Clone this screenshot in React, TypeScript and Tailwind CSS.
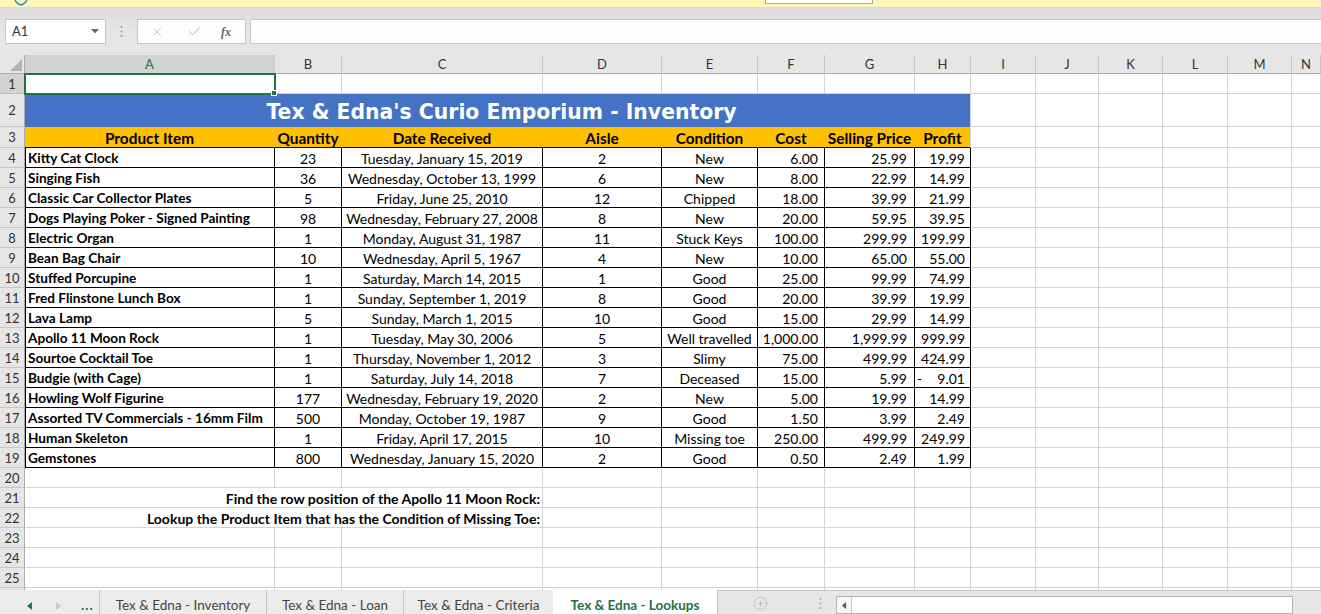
import { X, Check, CirclePlus } from 'lucide-react'

const COLS = 'grid grid-cols-[25px_250px_67px_201px_119px_96px_67px_90px_56px_65px_63px_64px_65px_64px_1fr] grid-rows-[100%] leading-none'
const LETTERS = ['A', 'B', 'C', 'D', 'E', 'F', 'G', 'H', 'I', 'J', 'K', 'L', 'M', 'N']

type Item = [string, string, string, string, string, string, string, string]

const items: Item[] = [
  ['Kitty Cat Clock', '23', 'Tuesday, January 15, 2019', '2', 'New', '6.00', '25.99', '19.99'],
  ['Singing Fish', '36', 'Wednesday, October 13, 1999', '6', 'New', '8.00', '22.99', '14.99'],
  ['Classic Car Collector Plates', '5', 'Friday, June 25, 2010', '12', 'Chipped', '18.00', '39.99', '21.99'],
  ['Dogs Playing Poker - Signed Painting', '98', 'Wednesday, February 27, 2008', '8', 'New', '20.00', '59.95', '39.95'],
  ['Electric Organ', '1', 'Monday, August 31, 1987', '11', 'Stuck Keys', '100.00', '299.99', '199.99'],
  ['Bean Bag Chair', '10', 'Wednesday, April 5, 1967', '4', 'New', '10.00', '65.00', '55.00'],
  ['Stuffed Porcupine', '1', 'Saturday, March 14, 2015', '1', 'Good', '25.00', '99.99', '74.99'],
  ['Fred Flinstone Lunch Box', '1', 'Sunday, September 1, 2019', '8', 'Good', '20.00', '39.99', '19.99'],
  ['Lava Lamp', '5', 'Sunday, March 1, 2015', '10', 'Good', '15.00', '29.99', '14.99'],
  ['Apollo 11 Moon Rock', '1', 'Tuesday, May 30, 2006', '5', 'Well travelled', '1,000.00', '1,999.99', '999.99'],
  ['Sourtoe Cocktail Toe', '1', 'Thursday, November 1, 2012', '3', 'Slimy', '75.00', '499.99', '424.99'],
  ['Budgie (with Cage)', '1', 'Saturday, July 14, 2018', '7', 'Deceased', '15.00', '5.99', '-9.01'],
  ['Howling Wolf Figurine', '177', 'Wednesday, February 19, 2020', '2', 'New', '5.00', '19.99', '14.99'],
  ['Assorted TV Commercials - 16mm Film', '500', 'Monday, October 19, 1987', '9', 'Good', '1.50', '3.99', '2.49'],
  ['Human Skeleton', '1', 'Friday, April 17, 2015', '10', 'Missing toe', '250.00', '499.99', '249.99'],
  ['Gemstones', '800', 'Wednesday, January 15, 2020', '2', 'Good', '0.50', '2.49', '1.99'],
]

const grid = 'border-r border-b border-[#d4d4d4]'

function RowHead({ n, active }: { n?: number; active?: boolean }) {
  return (
    <div
      className={`flex items-center justify-center pt-px border-r border-b text-[13px] text-[#333] ${
        active ? 'bg-[#d2d2d2] border-r-[#217346] border-b-[#bdbdbd]' : 'bg-[#e6e6e6] border-r-[#ababab] border-b-[#c6c6c6]'
      }`}
    >
      {n}
    </div>
  )
}

function Empties({ from }: { from: number }) {
  return (
    <>
      {LETTERS.slice(from).map((l) => (
        <div key={l} className={grid} />
      ))}
    </>
  )
}

function DataRow({ n, item }: { n: number; item: Item }) {
  const cell = 'border-r border-b border-black flex items-center pt-[2px] overflow-hidden whitespace-nowrap'
  const neg = item[7].startsWith('-')
  return (
    <div className={`${COLS} h-[20px] text-[14px]`}>
      <RowHead n={n} />
      <div className={`${cell} shadow-[inset_1px_0_0_#000] pl-[3px] font-bold text-[13.6px]`}>{item[0]}</div>
      <div className={`${cell} justify-center`}>{item[1]}</div>
      <div className={`${cell} justify-center`}>{item[2]}</div>
      <div className={`${cell} justify-center`}>{item[3]}</div>
      <div className={`${cell} justify-center`}>{item[4]}</div>
      <div className={`${cell} justify-end pr-[6px]`}>{item[5]}</div>
      <div className={`${cell} justify-end pr-[7px]`}>{item[6]}</div>
      <div className={`${cell} justify-between pr-[5px]`}>
        <span className="pl-[2px]">{neg ? '-' : ''}</span>
        <span>{neg ? item[7].slice(1) : item[7]}</span>
      </div>
      <Empties from={8} />
    </div>
  )
}

function EmptyRow({ n }: { n?: number }) {
  return (
    <div className={`${COLS} h-[20px]`}>
      <RowHead n={n} />
      <Empties from={0} />
    </div>
  )
}

function QuestionRow({ n, text }: { n: number; text: string }) {
  return (
    <div className={`${COLS} h-[20px]`}>
      <RowHead n={n} />
      <div className={`col-span-3 ${grid} flex items-center pt-[2px] justify-end pr-[2px] font-bold text-[14px] whitespace-nowrap`}>
        {text}
      </div>
      <Empties from={3} />
    </div>
  )
}

function Tri({ dir, color }: { dir: 'l' | 'r'; color: string }) {
  return (
    <svg width="5" height="8" viewBox="0 0 5 8">
      <polygon points={dir === 'l' ? '5,0 0,4 5,8' : '0,0 5,4 0,8'} fill={color} />
    </svg>
  )
}

export default function App() {
  return (
    <div className="w-[1321px] h-[614px] overflow-hidden bg-white text-[13px] text-black font-['Lato',_'Liberation_Sans',_sans-serif]">
      {/* message bar, mostly scrolled off */}
      <div className="relative h-[8px] overflow-hidden bg-[#fdf6b4] border-b border-[#ece08e]">
        <svg className="absolute left-[14px] -top-[9px]" width="14" height="15" viewBox="0 0 14 15">
          <path d="M7 1 L13 3 V7.5 C13 10.5 10.5 12.8 7 14 C3.5 12.8 1 10.5 1 7.5 V3 Z" fill="none" stroke="#2b88d8" strokeWidth="1.5" />
        </svg>
        <div className="absolute left-[765px] -top-[10px] w-[108px] h-[14px] bg-white border border-[#ababab]" />
      </div>

      {/* formula bar */}
      <div className="h-[47px] bg-gradient-to-b from-[#dcdcdc] via-[#e6e6e6] to-[#e6e6e6] pt-[11px] flex items-start">
        <div className="ml-[5px] w-[101px] h-[25px] bg-white border border-[#c6c6c6] flex items-center justify-between pl-[6px] pr-[6px] text-[13px] text-[#333]">
          <span>A1</span>
          <svg width="8" height="5" viewBox="0 0 8 5">
            <polygon points="0,0 8,0 4,4.5" fill="#6a6a6a" />
          </svg>
        </div>
        <div className="w-[31px] h-[25px] flex items-center justify-center">
          <svg width="3" height="13" viewBox="0 0 3 13">
            <circle cx="1.5" cy="2" r="1" fill="#9a9a9a" />
            <circle cx="1.5" cy="6.5" r="1" fill="#9a9a9a" />
            <circle cx="1.5" cy="11" r="1" fill="#9a9a9a" />
          </svg>
        </div>
        <div className="w-[109px] h-[25px] bg-[#fdfdfd] border border-[#c6c6c6] flex items-center">
          <X className="ml-[12px]" size={14} strokeWidth={1.3} color="#b4b4b4" />
          <Check className="ml-[23px]" size={15} strokeWidth={1.6} color="#b4b4b4" />
          <span className="ml-[19px] italic font-bold text-[12px] text-[#666] font-['Liberation_Serif',_serif]">fx</span>
        </div>
        <div className="ml-[4px] flex-1 h-[25px] bg-[#fdfdfd] border border-[#c6c6c6] border-r-0" />
      </div>

      {/* sheet */}
      <div className="h-[535px] overflow-hidden">
        {/* column headers */}
        <div className={`${COLS} h-[19px] bg-[#e6e6e6] text-[#333]`}>
          <div className="relative border-r border-b border-[#ababab]">
            <svg className="absolute right-[2px] bottom-[2px]" width="12" height="12" viewBox="0 0 12 12">
              <polygon points="12,0 12,12 0,12" fill="#b4b4b4" />
            </svg>
          </div>
          {LETTERS.map((l, i) => (
            <div
              key={l}
              className={`flex items-center justify-center pt-px border-r border-b ${
                i === 0 ? 'bg-[#d2d2d2] text-[#217346] border-r-[#c6c6c6] border-b-[#ababab]' : 'border-r-[#c6c6c6] border-b-[#ababab]'
              }`}
            >
              {l}
            </div>
          ))}
        </div>

        {/* row 1 */}
        <div className={`${COLS} h-[20px]`}>
          <RowHead n={1} active />
          <div className={`relative ${grid}`}>
            <div className="absolute -left-px -top-px w-[252px] h-[22px] border-2 border-[#217346]" />
            <div className="absolute -right-[3px] -bottom-[3px] w-[6px] h-[6px] bg-[#217346] border border-white" />
          </div>
          <Empties from={1} />
        </div>

        {/* row 2 title */}
        <div className={`${COLS} h-[33px]`}>
          <RowHead n={2} />
          <div className="col-span-8 bg-[#4472c4] border-r border-[#d4d4d4] flex items-center justify-center pl-[8px] pt-[3px] text-white font-bold text-[20.4px] font-['DejaVu_Sans',_'Verdana',_sans-serif] whitespace-nowrap">
            Tex &amp; Edna's Curio Emporium - Inventory
          </div>
          <Empties from={8} />
        </div>

        {/* row 3 headers */}
        <div className={`${COLS} h-[21px]`}>
          <RowHead n={3} />
          {['Product Item', 'Quantity', 'Date Received', 'Aisle', 'Condition', 'Cost', 'Selling Price', 'Profit'].map((h, i) => (
            <div
              key={h}
              className={`bg-[#ffc000] border-b border-b-black border-r ${
                i === 7 ? 'border-r-[#d4d4d4]' : 'border-r-[#ffc000]'
              } flex items-center justify-center pt-[3px] font-bold text-[15.4px] whitespace-nowrap`}
            >
              {h}
            </div>
          ))}
          <Empties from={8} />
        </div>

        {items.map((it, i) => (
          <DataRow key={it[0]} n={i + 4} item={it} />
        ))}

        <EmptyRow n={20} />
        <QuestionRow n={21} text="Find the row position of the Apollo 11 Moon Rock:" />
        <QuestionRow n={22} text="Lookup the Product Item that has the Condition of Missing Toe:" />
        <EmptyRow n={23} />
        <EmptyRow n={24} />
        <EmptyRow n={25} />
        <EmptyRow />
      </div>

      {/* sheet tabs */}
      <div className="h-[24px] flex bg-[#ececec] text-[13.5px] leading-none text-[#444]">
        <div className="w-[100px] flex items-center pt-[8px] border-r border-[#c6c6c6]">
          <span className="ml-[27px] flex">
            <Tri dir="l" color="#217346" />
          </span>
          <span className="ml-[24px] flex">
            <Tri dir="r" color="#c8c8c8" />
          </span>
          <span className="ml-[20px] font-bold text-[#217346] tracking-[1px]">...</span>
        </div>
        <div className="w-[167px] flex items-center justify-center pt-[8px] border-r border-[#c6c6c6]">Tex &amp; Edna - Inventory</div>
        <div className="w-[137px] flex items-center justify-center pt-[8px] border-r border-[#c6c6c6]">Tex &amp; Edna - Loan</div>
        <div className="w-[149px] flex items-center justify-center pt-[8px]">Tex &amp; Edna - Criteria</div>
        <div className="w-[164px] flex items-center justify-center pt-[8px] bg-white font-bold text-[#217346]">Tex &amp; Edna - Lookups</div>
        <div className="flex-1 flex items-center pt-[2px] bg-[#e6e6e6] border-t border-l border-[#c6c6c6]">
          <CirclePlus className="ml-[35px]" size={15} strokeWidth={1.2} color="#b8b8b8" />
          <svg className="ml-[51px]" width="3" height="13" viewBox="0 0 3 13">
            <circle cx="1.5" cy="2" r="1" fill="#a8a8a8" />
            <circle cx="1.5" cy="6.5" r="1" fill="#a8a8a8" />
            <circle cx="1.5" cy="11" r="1" fill="#a8a8a8" />
          </svg>
          <div className="ml-[14px] h-[18px] mt-[3px] self-start w-[457px] flex border border-[#b4b4b4] bg-white">
            <div className="w-[15px] flex items-center justify-center border-r border-[#c6c6c6] bg-[#f6f6f6]">
              <svg width="4" height="7" viewBox="0 0 4 7">
                <polygon points="4,0 0,3.5 4,7" fill="#555" />
              </svg>
            </div>
            <div className="flex-1" />
          </div>
        </div>
      </div>
    </div>
  )
}
